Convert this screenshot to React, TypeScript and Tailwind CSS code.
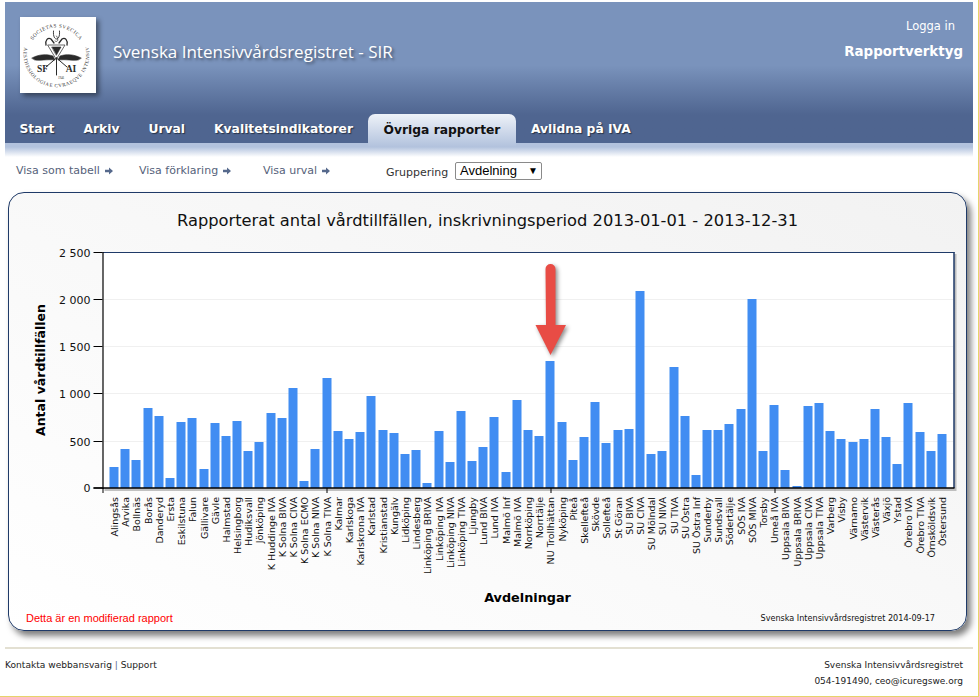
const tabs = ['Start', 'Arkiv', 'Urval', 'Kvalitetsindikatorer', 'Övriga rapporter', 'Avlidna på IVA']

const units: [string, number][] = [
  ['Alingsås', 711], ['Arvika', 657], ['Bollnäs', 690], ['Borås', 534], ['Danderyd', 558],
  ['Ersta', 744], ['Eskilstuna', 576], ['Falun', 564], ['Gällivare', 717], ['Gävle', 579],
  ['Halmstad', 618], ['Helsingborg', 573], ['Hudiksvall', 663], ['Jönköping', 636], ['K Huddinge IVA', 549],
  ['K Solna BIVA', 564], ['K Solna CIVA', 474], ['K Solna ECMO', 753], ['K Solna NIVA', 657], ['K Solna TIVA', 444],
  ['Kalmar', 603], ['Karlskoga', 627], ['Karlskrona IVA', 606], ['Karlstad', 498], ['Kristianstad', 600],
  ['Kungälv', 609], ['Lidköping', 672], ['Lindesberg', 660], ['Linköping BRIVA', 759], ['Linköping IVA', 603],
  ['Linköping NIVA', 696], ['Linköping TIVA', 543], ['Ljungby', 693], ['Lund BIVA', 651], ['Lund IVA', 561],
  ['Malmö Inf', 726], ['Malmö IVA', 510], ['Norrköping', 600], ['Norrtälje', 618], ['NU Trollhättan', 393],
  ['Nyköping', 576], ['Piteå', 690], ['Skellefteå', 621], ['Skövde', 516], ['Sollefteå', 639],
  ['St Göran', 600], ['SU BIVA', 597], ['SU CIVA', 183], ['SU Mölndal', 672], ['SU NIVA', 663],
  ['SU TIVA', 411], ['SU Östra', 558], ['SU Östra Inf', 735], ['Sunderby', 600], ['Sundsvall', 600],
  ['Södertälje', 582], ['SÖS IVA', 537], ['SÖS MIVA', 207], ['Torsby', 663], ['Umeå IVA', 525],
  ['Uppsala BIVA', 720], ['Uppsala BRIVA', 768], ['Uppsala CIVA', 528], ['Uppsala TIVA', 519], ['Varberg', 603],
  ['Visby', 627], ['Värnamo', 636], ['Västervik', 627], ['Västerås', 537], ['Växjö', 621],
  ['Ystad', 702], ['Örebro IVA', 519], ['Örebro TIVA', 606], ['Örnsköldsvik', 663], ['Östersund', 612],
]

const yTicks: [string, number][] = [
  ['2 500', 252.5], ['2 000', 299.5], ['1 500', 346.5], ['1 000', 393.5], ['500', 441.5], ['0', 488],
]

function Logo() {
  return (
    <svg viewBox="0 0 76 76" className="w-[76px] h-[76px]">
      <rect width="76" height="76" fill="#fff" />
      <defs>
        <path id="sealTop" d="M8.500 38.500A28 28 0 0 1 64.500 38.500" />
        <path id="sealBottom" d="M4.300 30A33 33 0 1 0 68.700 30" />
      </defs>
      <g fontFamily="'Liberation Serif', serif" fill="#333">
        <text fontSize="5.200" letterSpacing="0.5">
          <textPath href="#sealTop" startOffset="50%" textAnchor="middle">SOCIETAS SVECICA</textPath>
        </text>
        <text fontSize="5" letterSpacing="0.6">
          <textPath href="#sealBottom" startOffset="50%" textAnchor="middle">ANAESTHESIOLOGIAE CVRAEQVE INTENSIVAE</textPath>
        </text>
      </g>
      <g fill="#2a2a2a" stroke="#2a2a2a" strokeLinecap="round">
        <path d="M12 41 C19 37 27 37 33 39 L35 43 C27 42 20 44 15 43 Z" strokeWidth="0.6" />
        <path d="M61 41 C54 37 46 37 40 39 L38 43 C46 42 53 44 58 43 Z" strokeWidth="0.6" />
        <path d="M26 28 C25 23 28 20 31 22 L34 26 M47 28 C48 23 45 20 42 22 L39 26" strokeWidth="1.3" fill="none" />
        <path d="M28 28 L45 28 L36.500 42 Z" strokeWidth="0.7" fill="none" />
        <path d="M32 30 L41 30 L36.500 38 Z" strokeWidth="0.6" />
        <path d="M36.500 41 L26 50 M36.500 41 L47 50 M36.500 41 L36.500 58" strokeWidth="1" fill="none" />
        <path d="M33.500 14 C33 20 35 22 36.500 22 C38 22 40 20 39.500 14" strokeWidth="0.9" fill="none" />
        <path d="M35 24 C38 26 39 22 36.500 19" strokeWidth="0.7" fill="none" />
      </g>
      <g fontFamily="'Liberation Serif', serif" fontWeight="700" fill="#2a2a2a" textAnchor="middle">
        <text x="22.500" y="55" fontSize="9.500">SF</text>
        <text x="51" y="55" fontSize="9.500">AI</text>
        <text x="41" y="62" fontSize="3" fontWeight="400">1946</text>
      </g>
    </svg>
  )
}

function ArrowIcon() {
  return (
    <svg viewBox="0 0 8 8" className="w-2 h-2 ml-[5px] inline-block">
      <path d="M0 2.800h4V0.500L8 4 4 7.500V5.200H0z" fill="#56698c" />
    </svg>
  )
}

function Chart() {
  return (
    <svg viewBox="9.500 240 956 368" className="w-[956px] h-[368px] block" fontFamily="'DejaVu Sans', sans-serif">
      <rect x="105" y="254" width="852" height="237" fill="#999" opacity="0.6" />
      <rect x="103.500" y="252.500" width="851" height="235.500" fill="#fff" />
      {yTicks.slice(1, 5).map(([label, y]) => (
        <line key={label} x1="104" x2="954" y1={y} y2={y} stroke="#f0f0f0" />
      ))}
      {units.map(([name, top], i) => {
        const x = Math.round(110 + i * 11.19)
        const barTop = 230 + top / 3
        return <rect key={name} x={x} y={barTop} width="9" height={488 - barTop} fill="#418df2" />
      })}
      <line x1="103" x2="955" y1="252.500" y2="252.500" stroke="#1f3a68" />
      <line x1="954.500" x2="954.500" y1="252" y2="488" stroke="#1f3a68" strokeWidth="1.500" />
      <line x1="103.500" x2="103.500" y1="252" y2="489" stroke="#000" strokeWidth="1.200" />
      <line x1="94" x2="955" y1="488" y2="488" stroke="#000" strokeWidth="1.500" />
      {yTicks.map(([label, y]) => (
        <g key={label}>
          <line x1="94" x2="103" y1={y} y2={y} stroke="#000" />
          <text x="91" y={y + 4} fontSize="11" textAnchor="end" fill="#111">{label}</text>
        </g>
      ))}
      {[103.5, 327.5, 551.5, 775.5].map(x => (
        <line key={x} x1={x} x2={x} y1="488" y2="493" stroke="#000" />
      ))}
      {units.map(([name], i) => {
        const x = Math.round(110 + i * 11.19) + 8
        return (
          <text key={name} transform={`translate(${x},497) rotate(-90)`} fontSize="9.500" textAnchor="end" fill="#111">
            {name}
          </text>
        )
      })}
      <text transform="translate(45,370) rotate(-90)" fontSize="12.500" fontWeight="700" textAnchor="middle" fill="#000">
        Antal vårdtillfällen
      </text>
      <text x="528" y="602" fontSize="12.800" fontWeight="700" textAnchor="middle" fill="#000">Avdelningar</text>
      <path
        d="M546 269a5 5 0 0 1 10 0v56h10.500l-15.500 30-15-30h10.500z"
        fill="#e84c45"
        className="drop-shadow-[2px_2px_2px_rgba(0,0,0,0.45)]"
      />
    </svg>
  )
}

export default function App() {
  return (
    <div className="w-[979px] h-[697px] bg-white border-r border-b border-[#e6d36a] pt-[2px] overflow-hidden font-['DejaVu_Sans',sans-serif]">
      <header className="ml-[5px] w-[968px] h-[141px] flex flex-col bg-gradient-to-b from-[#7a93bc] from-[45%] to-[#4f6590] to-[80%]">
        <div className="flex-1 flex pl-[15px] pt-[15px]">
          <div className="shadow-[3px_3px_5px_rgba(0,0,0,0.45)] h-[76px]">
            <Logo />
          </div>
          <div className="ml-[17px] mt-[22px] text-[17px] leading-[26px] text-white font-['Open_Sans',sans-serif] [text-shadow:2px_2px_3px_rgba(0,0,0,0.45)]">
            Svenska Intensivvårdsregistret - SIR
          </div>
          <div className="ml-auto pr-[10px] flex flex-col items-end text-white">
            <div className="text-[11.500px] leading-[14px] mt-[2px] mr-[8px]">Logga in</div>
            <div className="text-[13.400px] leading-[18px] font-bold mt-[10px]">Rapportverktyg</div>
          </div>
        </div>
        <nav className="flex h-[29px]">
          {tabs.map(t =>
            t === 'Övriga rapporter' ? (
              <div
                key={t}
                className="h-[33px] px-[16px] rounded-t-[7px] flex items-center text-[12.300px] font-bold text-[#111] bg-gradient-to-b from-[#eef2f8] to-[#b2c2dd]"
              >
                {t}
              </div>
            ) : (
              <div
                key={t}
                className="px-[14.500px] pt-[1px] flex items-center text-[12.300px] font-bold text-white [text-shadow:1px_1px_1px_rgba(0,0,0,0.5)]"
              >
                {t}
              </div>
            )
          )}
        </nav>
      </header>
      <div className="ml-[5px] w-[968px] h-[14px] bg-gradient-to-b from-[#b2c2dd] from-[28%] to-white" />

      <div className="h-[35px] flex items-start pl-[16px] pt-[6px] text-[11px] leading-[16px] text-[#56627a]">
        <a className="w-[123px] flex items-center">Visa som tabell<ArrowIcon /></a>
        <a className="w-[124px] flex items-center">Visa förklaring<ArrowIcon /></a>
        <a className="w-[123px] flex items-center">Visa urval<ArrowIcon /></a>
        <span className="mt-[2px] w-[69px] text-[#333]">Gruppering</span>
        <div className="w-[87px] h-[18px] -mt-[1px] border border-[#8a8a8a] rounded-[2px] bg-white flex items-center justify-between pl-[4px] pr-[3px] text-[13px] text-black font-['Liberation_Sans',sans-serif]">
          Avdelning
          <span className="text-[10px]">▼</span>
        </div>
      </div>

      <main className="ml-[8px] w-[959px] h-[439px] rounded-[16px] border-[1.5px] border-[#1f3a68] bg-gradient-to-bl from-[#f2f2f2] to-white shadow-[4px_5px_6px_rgba(0,0,0,0.5)] flex flex-col">
        <h2 className="h-[46.500px] pt-[17px] text-center text-[16.300px] leading-[22px] text-[#111]">
          Rapporterat antal vårdtillfällen, inskrivningsperiod 2013-01-01 - 2013-12-31
        </h2>
        <Chart />
        <div className="flex items-center justify-between pl-[17px] pr-[31px] mt-[2px]">
          <span className="text-[11px] text-[#f00] font-['Liberation_Sans',sans-serif]">Detta är en modifierad rapport</span>
          <span className="text-[8.100px] text-[#111]">Svenska Intensivvårdsregistret 2014-09-17</span>
        </div>
      </main>

      <footer className="ml-[5px] w-[968px] mt-[16px] border-t-2 border-[#e3e0d2] pt-[8px] flex justify-between text-[9.100px] leading-[16px] text-[#222]">
        <div>
          Kontakta webbansvarig <span className="text-[#56698c]">|</span> Support
        </div>
        <div className="text-right pr-[10px] text-[9px]">
          <div>Svenska Intensivvårdsregistret</div>
          <div>054-191490, ceo@icuregswe.org</div>
        </div>
      </footer>
    </div>
  )
}
